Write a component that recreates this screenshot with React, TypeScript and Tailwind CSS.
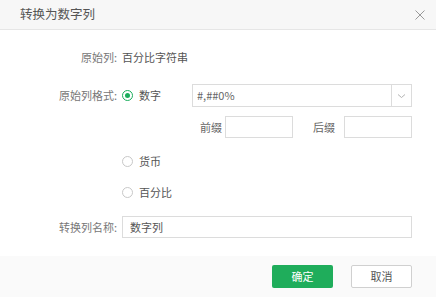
import React from 'react';

const Radio = ({ checked, label }: { checked?: boolean; label: string }) => (
  <div className="flex items-center">
    <span
      className={`w-[11px] h-[11px] rounded-full border flex items-center justify-center ${
        checked ? 'border-[#1aad5c]' : 'border-[#c8c8c8]'
      }`}
    >
      {checked && <span className="w-[5px] h-[5px] rounded-full bg-[#1aad5c]" />}
    </span>
    <span className="ml-[6px] text-[#555]">{label}</span>
  </div>
);

export default function App() {
  return (
    <div
      className="w-[436px] h-[297px] bg-white flex flex-col text-[11px] leading-none"
      style={{ fontFamily: '"Noto Sans CJK SC", "Noto Sans", sans-serif' }}
    >
      <header className="h-[30px] bg-[#f7f7f7] border-b border-[#e6e6e6] flex items-center justify-between pl-[20px] pr-[8px] shrink-0">
        <span className="text-[12.5px] font-normal text-[#555]">转换为数字列</span>
        <svg width="16" height="16" viewBox="0 0 16 16" className="text-[#999]">
          <path d="M3.5 3.5L12.5 12.5M12.5 3.5L3.5 12.5" stroke="currentColor" strokeWidth="1" />
        </svg>
      </header>

      <main className="flex-1 flex flex-col">
        <div className="flex items-center h-[22px] mt-[16px]">
          <span className="w-[117px] text-right text-[#777]">原始列:</span>
          <span className="ml-[5px] text-[#555]">百分比字符串</span>
        </div>

        <div className="flex mt-[16px]">
          <span className="w-[117px] text-right text-[#777] h-[23px] flex items-center justify-end">原始列格式:</span>
          <div className="ml-[5px] flex flex-col">
            <div className="flex items-center h-[23px]">
              <div className="w-[70px]">
                <Radio checked label="数字" />
              </div>
              <div className="w-[220px] h-[23px] border border-[#dcdcdc] flex items-center">
                <span className="flex-1 pl-[4px] text-[#666]">#,##0%</span>
                <span className="w-[20px] h-full border-l border-[#dcdcdc] flex items-center justify-center">
                  <svg width="9" height="6" viewBox="0 0 9 6" className="text-[#aaa]">
                    <path d="M1 1.5L4.5 4.5L8 1.5" fill="none" stroke="currentColor" strokeWidth="0.9" />
                  </svg>
                </span>
              </div>
            </div>

            <div className="flex items-center h-[22px] mt-[9px] ml-[70px]">
              <span className="ml-[8px] w-[25px] text-[#666]">前缀</span>
              <span className="w-[68px] h-[22px] border border-[#dcdcdc]" />
              <span className="ml-[20px] w-[31px] text-[#666]">后缀</span>
              <span className="w-[68px] h-[22px] border border-[#dcdcdc]" />
            </div>

            <div className="flex items-center h-[22px] mt-[12px]">
              <Radio label="货币" />
            </div>
            <div className="flex items-center h-[22px] mt-[9px]">
              <Radio label="百分比" />
            </div>
          </div>
        </div>

        <div className="flex items-center h-[22px] mt-[13px]">
          <span className="w-[117px] text-right text-[#777]">转换列名称:</span>
          <div className="ml-[5px] w-[290px] h-[22px] border border-[#dcdcdc] flex items-center pl-[7px] text-[#555]">
            数字列
          </div>
        </div>
      </main>

      <footer className="h-[41px] bg-[#fafafa] flex items-center justify-end pr-[24px] gap-[18px] shrink-0">
        <button className="w-[61px] h-[23px] bg-[#1fad5b] text-white rounded-[2px] text-[11px]">确定</button>
        <button className="w-[61px] h-[23px] bg-white border border-[#d0d0d0] text-[#555] rounded-[2px] text-[11px]">取消</button>
      </footer>
    </div>
  );
}
